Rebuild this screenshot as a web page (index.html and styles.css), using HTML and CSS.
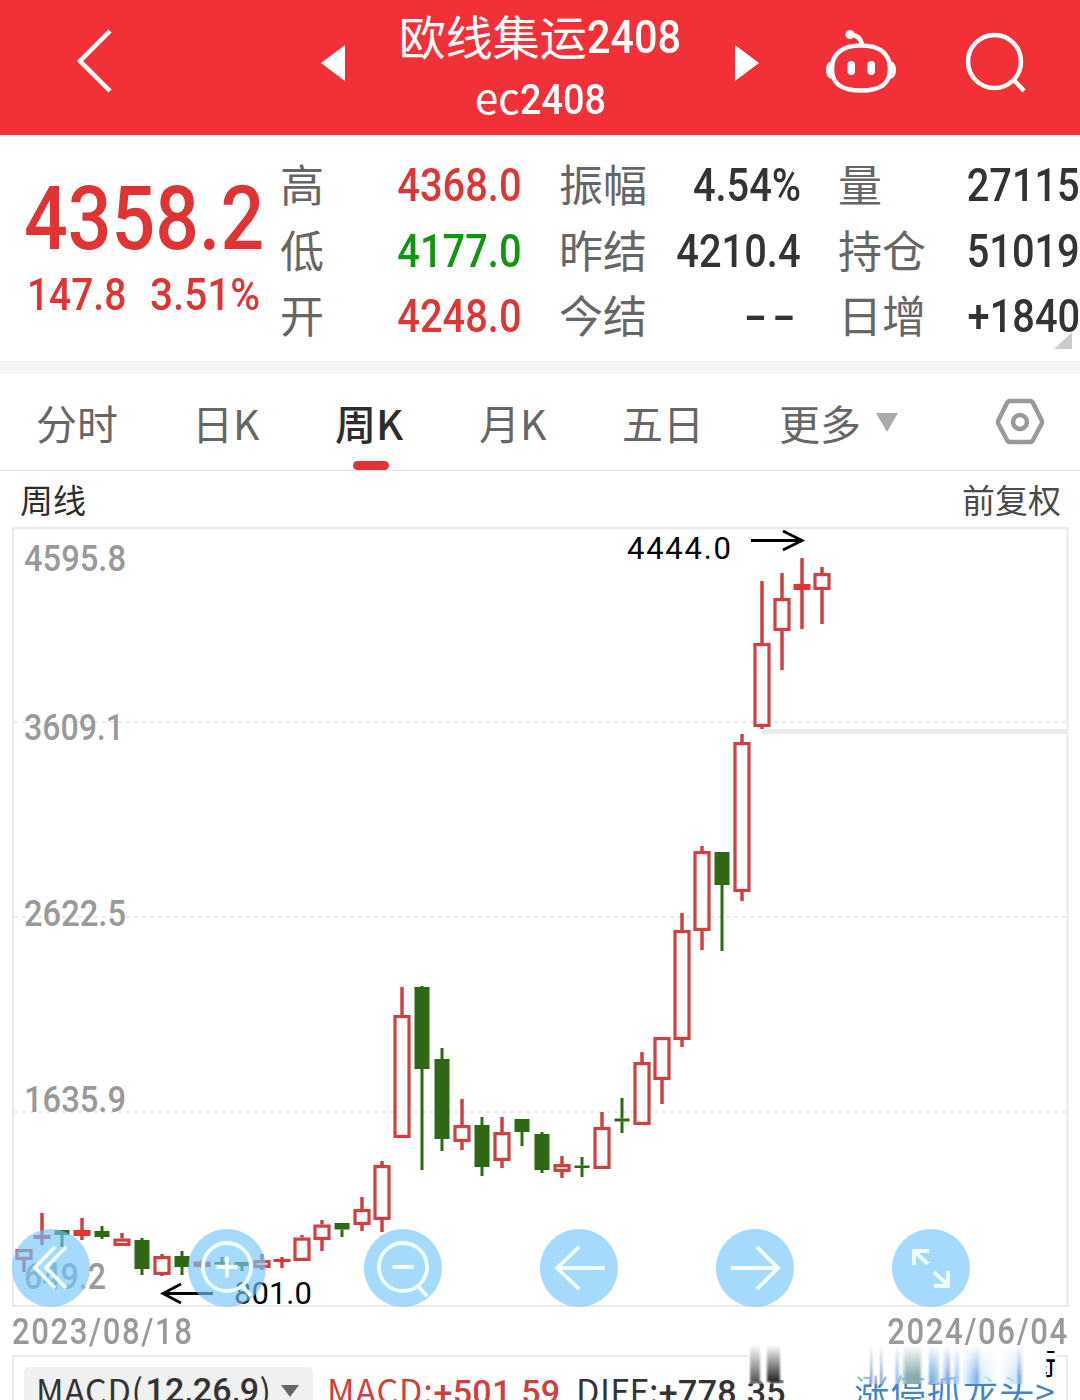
FILE: index.html
```html
<!DOCTYPE html>
<html lang="zh-CN">
<head>
    <meta charset="UTF-8">
    <meta name="viewport" content="width=device-width, initial-scale=1.0">
    <title>欧线集运2408</title>
    <link rel="stylesheet" href="styles.css">
</head>
<body>
    <header class="header">
        <svg class="back" width="44" height="70" viewBox="0 0 44 70"><path d="M37 5 L7 35 L37 65"/></svg>
        <svg class="prev" width="24" height="36" viewBox="0 0 24 36"><path d="M24 0 V36 L0 18 Z"/></svg>
        <div class="title">
            <div class="name">欧线集运<span class="num">2408</span></div>
            <div class="code">ec<span class="num">2408</span></div>
        </div>
        <svg class="next" width="24" height="36" viewBox="0 0 24 36"><path d="M0 0 V36 L24 18 Z"/></svg>
        <svg class="robot" width="70" height="64" viewBox="826 30 70 64">
            <path d="M861 45.500 C879 45.500 890 53 890 69 C890 84 881 90.500 861 90.500 C841 90.500 832 84 832 69 C832 53 843 45.500 861 45.500 Z"/>
            <path d="M862 45 C861 38 857 35 850 34.500"/>
            <path class="fill" d="M833 61 C828 61 826 65 826 70 C826 75 828 79 833 79 Z M889 61 C894 61 896 65 896 70 C896 75 894 79 889 79 Z"/>
            <circle class="fill" cx="850" cy="34.500" r="4.500"/>
            <rect class="fill" x="847.500" y="61" width="7.500" height="14" rx="3.700"/>
            <rect class="fill" x="867.500" y="61" width="7.500" height="14" rx="3.700"/>
        </svg>
        <svg class="search" width="64" height="64" viewBox="964 30 64 64">
            <circle cx="994.500" cy="61.500" r="26.500"/>
            <path d="M1013 79 L1024 91"/>
        </svg>
    </header>

    <section class="quote">
        <div class="price">
            <div class="last"><span class="num">4358.2</span></div>
            <div class="change"><span class="num">147.8</span><span class="num percent">3.51%</span></div>
        </div>
        <div class="stats">
            <div class="stat"><span>高</span><span class="num red">4368.0</span></div>
            <div class="stat"><span>振幅</span><span class="num">4.54%</span></div>
            <div class="stat"><span>量</span><span class="num">27115</span></div>
            <div class="stat"><span>低</span><span class="num green">4177.0</span></div>
            <div class="stat"><span>昨结</span><span class="num">4210.4</span></div>
            <div class="stat"><span>持仓</span><span class="num">51019</span></div>
            <div class="stat"><span>开</span><span class="num red">4248.0</span></div>
            <div class="stat"><span>今结</span><span class="num dashes">--</span></div>
            <div class="stat"><span>日增</span><span class="num">+1840</span></div>
        </div>
        <div class="corner"></div>
    </section>

    <nav class="tabs">
        <div><span class="tab">分时</span></div>
        <div><span class="tab">日K</span></div>
        <div><span class="tab active">周K</span></div>
        <div><span class="tab">月K</span></div>
        <div><span class="tab">五日</span></div>
        <div class="more"><span class="tab">更多</span><svg width="24" height="19" viewBox="0 0 24 19"><path d="M1 0 H23 L12 19 Z"/></svg></div>
        <svg class="gear" width="50" height="48" viewBox="995 398 50 48">
            <path d="M1010 401 H1030 Q1032 401 1033 403 L1041.500 420 Q1042.500 422 1041.500 424 L1033 440 Q1032 442 1030 442 H1010 Q1008 442 1007 440 L998.500 424 Q997.500 422 998.500 420 L1007 403 Q1008 401 1010 401 Z"/>
            <circle cx="1020" cy="422" r="7"/>
        </svg>
    </nav>

    <div class="chart-head">
        <span>周线</span>
        <span class="adjust">前复权</span>
    </div>

    <main class="chart">
        <svg class="kline" width="1080" height="780" viewBox="0 527 1080 780">
            <rect class="frame" x="13" y="528" width="1054.500" height="778"/>
            <path class="grid-line" d="M14 722 H1067 M14 917 H1067 M14 1112 H1067"/>
            <rect class="gap-line" x="762" y="729" width="306" height="5"/>
            <g id="candles"></g>
            <g class="axis">
                <text x="24" y="571" textLength="102" lengthAdjust="spacingAndGlyphs">4595.8</text>
                <text x="24" y="740" textLength="100" lengthAdjust="spacingAndGlyphs">3609.1</text>
                <text x="24" y="926" textLength="102" lengthAdjust="spacingAndGlyphs">2622.5</text>
                <text x="24" y="1112" textLength="102" lengthAdjust="spacingAndGlyphs">1635.9</text>
                <text x="24" y="1289" textLength="82" lengthAdjust="spacingAndGlyphs">649.2</text>
            </g>
            <g class="mark">
                <text x="627" y="559" textLength="104">4444.0</text>
                <path d="M751 540.500 H802 M783 531 L802 540.500 L783 550"/>
                <text x="234" y="1304" textLength="78">801.0</text>
                <path d="M213 1293.500 H163 M181 1284 L163 1293.500 L181 1303"/>
            </g>
        </svg>
        <div class="tools">
            <button class="tool"><svg width="78" height="78"><path d="M43 18 L23 38.500 L43 59 M54 18 L34 38.500 L54 59"/></svg></button>
            <button class="tool"><svg width="78" height="78"><circle cx="39" cy="38" r="24"/><path d="M54 57 L63 67 M28.500 38 H49.500 M39 27.500 V48.500"/></svg></button>
            <button class="tool"><svg width="78" height="78"><circle cx="39" cy="38" r="24"/><path d="M54 57 L63 67 M28.500 38 H49.500"/></svg></button>
            <button class="tool"><svg width="78" height="78"><path d="M65 39 H16 M39 18 L17 39 L39 60"/></svg></button>
            <button class="tool"><svg width="78" height="78"><path d="M15 39 H63 M41 18 L62 39 L41 60"/></svg></button>
            <button class="tool"><svg width="78" height="78"><path d="M22 36 V22 H37 M22 22 L36 35 M42 57 H56 V42 M56 56 L42 43"/></svg></button>
        </div>
    </main>

    <div class="dates">
        <span class="num">2023/08/18</span>
        <span class="num">2024/06/04</span>
    </div>

    <section class="indicator">
        <div class="picker">MACD(<b>12,26,9</b>)<svg width="18" height="12" viewBox="0 0 18 12"><path d="M0 0 H18 L9 12 Z"/></svg></div>
        <span class="macd">MACD:<b>+501.59</b></span>
        <span class="diff">DIFF:<b>+778.35</b></span>
        <a class="link">涨停抓龙头&gt;</a>
        <div class="haze">
            <i class="bar"></i>
            <i class="bar second"></i>
            <i class="streaks"></i>
            <span class="tail">街</span>
        </div>
    </section>

    <script>
        // x, high, body top, body bottom, low, type (r = hollow red, s = solid red, g = green)
        const candles = [
            [24, 1249, 1249, 1260, 1272, 'r'],
            [42, 1213, 1235, 1239, 1245, 's'],
            [62, 1230, 1230, 1235, 1247, 'g'],
            [82, 1218, 1230, 1236, 1240, 's'],
            [102, 1226, 1231, 1237, 1239, 'g'],
            [122, 1233, 1238.5, 1246, 1246, 'r'],
            [142, 1238, 1240, 1269, 1275, 'g'],
            [162, 1254, 1256, 1275, 1276, 'r'],
            [182, 1251, 1256, 1267, 1275, 'g'],
            [202, 1260, 1261.5, 1267, 1268, 's'],
            [222, 1257, 1262, 1264.5, 1268, 'g'],
            [242, 1262, 1262, 1266, 1271, 'g'],
            [262, 1254, 1260, 1268, 1270, 'r'],
            [282, 1257, 1259, 1262, 1268, 's'],
            [302, 1235, 1237.5, 1261, 1261, 'r'],
            [322, 1220, 1224.5, 1240, 1251, 'r'],
            [342, 1223, 1223, 1229.5, 1237, 'g'],
            [362, 1197, 1209, 1225, 1231, 'r'],
            [382, 1161, 1165, 1220, 1232, 'r'],
            [402, 987, 1015, 1138, 1138, 'r'],
            [422, 986, 987, 1069, 1170, 'g'],
            [442, 1048, 1059, 1139, 1151, 'g'],
            [462, 1099, 1125, 1142, 1150, 'r'],
            [482, 1117, 1125, 1167, 1176, 'g'],
            [502, 1117, 1132, 1161, 1168, 'r'],
            [522, 1119, 1119, 1132, 1146, 'g'],
            [542, 1132, 1134, 1170, 1173, 'g'],
            [562, 1156, 1164, 1172, 1178, 'r'],
            [582, 1157, 1165.5, 1168, 1177, 'g'],
            [602, 1112, 1127, 1169, 1169, 'r'],
            [622, 1098, 1118.5, 1121.5, 1133, 'g'],
            [642, 1052, 1062, 1125, 1125, 'r'],
            [662, 1037, 1037, 1080, 1104, 'r'],
            [682, 913, 930, 1040, 1047, 'r'],
            [702, 846, 851, 931, 950, 'r'],
            [722, 852, 852, 885, 951, 'g'],
            [742, 734, 742, 892, 901, 'r'],
            [762, 581, 643, 727, 729, 'r'],
            [782, 573, 598, 631, 670, 'r'],
            [802, 558, 584, 590, 629, 's'],
            [822, 567, 573, 590, 624, 'r']
        ];

        let html = '';
        candles.forEach(([x, high, top, bottom, low, type]) => {
            html += `<path class="wick-${type}" d="M${x} ${high} V${top} M${x} ${bottom} V${low}"/>`;
            if (type === 'r') {
                html += `<rect class="body-r" x="${x - 7}" y="${top + 1.6}" width="14" height="${bottom - top - 3.2}"/>`;
            } else {
                const half = type === 's' ? 8.5 : 7.5;
                html += `<rect class="body-${type}" x="${x - half}" y="${top}" width="${half * 2}" height="${bottom - top}"/>`;
            }
        });
        document.querySelector('#candles').innerHTML = html;
    </script>
</body>
</html>
```

FILE: styles.css
```css
* {
    box-sizing: border-box;
}
body {
    margin: 0;
    width: 1080px;
    height: 1400px;
    overflow: hidden;
    background-color: #fff;
    color: #333;
    font-family: "Noto Sans CJK SC", sans-serif;
}
svg {
    display: block;
    flex: none;
}
.num {
    display: inline-block;
    font-family: Roboto, sans-serif;
    font-weight: 500;
    transform: scaleX(0.865);
    transform-origin: right center;
}

/* header */
.header {
    display: flex;
    height: 135px;
    background-color: #f23037;
    color: #fff;
}
.header svg {
    fill: none;
    stroke: #fff;
    stroke-width: 4.5;
}
.header .fill,
.header .prev,
.header .next {
    fill: #fff;
    stroke: none;
}
.back {
    margin: 26px 0 0 73px;
}
.prev {
    margin: 45px 0 0 204px;
}
.title {
    width: 390px;
    text-align: center;
    white-space: nowrap;
}
.title .num {
    transform: scaleX(0.9);
    transform-origin: left center;
    margin-right: -10px;
}
.name {
    height: 69px;
    line-height: 69px;
    font-size: 47px;
}
.name .num {
    font-size: 46px;
    line-height: 60px;
    vertical-align: 2px;
}
.code {
    height: 56px;
    line-height: 54px;
    font-size: 42px;
}
.next {
    margin: 45px 0 0;
}
.robot {
    margin: 30px 0 0 67px;
}
.search {
    margin: 30px 0 0 68px;
}

/* quote */
.quote {
    position: relative;
    display: flex;
    height: 239px;
    padding-top: 17px;
    border-bottom: 13px solid #f5f5f5;
}
.price {
    width: 280px;
    color: #e03434;
}
.price .num {
    transform-origin: left center;
}
.last {
    height: 118px;
    padding: 5px 0 0 24px;
    line-height: 108px;
    font-size: 89px;
}
.change {
    display: flex;
    padding-left: 27px;
    line-height: 50px;
    font-size: 45px;
}
.change .percent {
    margin-left: 8px;
    transform: scaleX(0.9);
}
.stats {
    display: grid;
    grid-template-columns: 279px 279px 242px;
    grid-auto-rows: 65.5px;
    font-size: 44px;
    line-height: 63px;
    color: #666;
}
.stat {
    display: flex;
    justify-content: space-between;
    padding-right: 37px;
}
.stat:nth-child(3n) {
    padding-right: 0;
}
.stat .num {
    font-size: 46px;
    line-height: 66px;
    color: #333;
}
.stat .num.red {
    color: #dc3737;
}
.stat .num.green {
    color: #109610;
}
.stat .dashes {
    letter-spacing: 4px;
    transform: scaleX(1.45);
}
.corner {
    position: absolute;
    right: 8px;
    bottom: 12px;
    border-left: 18px solid transparent;
    border-bottom: 17px solid #ccc;
}

/* tabs */
.tabs {
    display: grid;
    grid-template-columns: 156px 143px 144px 143px 157px 216px 50px;
    height: 97px;
    padding-left: 36px;
    border-bottom: 1px solid #e2e2e2;
    font-size: 41px;
    line-height: 96px;
    color: #666;
}
.tab {
    display: inline-block;
}
.active {
    position: relative;
    font-weight: 500;
    color: #2d2d2d;
}
.active::after {
    content: "";
    position: absolute;
    left: 18px;
    top: 87px;
    width: 36px;
    height: 9px;
    border-radius: 5px;
    background-color: #e03434;
}
.more {
    display: flex;
}
.more svg {
    margin: 39px 0 0 14px;
    fill: #aaa;
}
.gear {
    margin-top: 24px;
    fill: none;
    stroke: #999;
    stroke-width: 4.5;
}

/* chart */
.chart-head {
    display: flex;
    justify-content: space-between;
    height: 56px;
    padding: 0 19px 0 20px;
    font-size: 33px;
    line-height: 56px;
    color: #2d2d2d;
}
.adjust {
    color: #4a4a4a;
}
.chart {
    position: relative;
    height: 780px;
}
.frame {
    fill: none;
    stroke: #e9e9e9;
    stroke-width: 2;
}
.grid-line {
    stroke: #e4e4e4;
    stroke-width: 1.5;
    stroke-dasharray: 4 4;
}
.gap-line {
    fill: #ebebeb;
}
.wick-r,
.wick-s {
    stroke: #d04040;
    stroke-width: 3.5;
}
.wick-g {
    stroke: #2f6815;
    stroke-width: 3;
}
.body-r {
    fill: #fff;
    stroke: #d04040;
    stroke-width: 3.2;
}
.body-s {
    fill: #df3535;
}
.body-g {
    fill: #2f6815;
}
.axis {
    fill: #999;
    font: 500 36px Roboto, sans-serif;
}
.mark {
    fill: #000;
    font: 31px Roboto, sans-serif;
}
.mark path {
    fill: none;
    stroke: #000;
    stroke-width: 2.8;
}
.tools {
    position: absolute;
    left: 12px;
    bottom: 0;
    display: flex;
    gap: 98px;
}
.tool {
    width: 78px;
    height: 78px;
    padding: 0;
    border: none;
    border-radius: 50%;
    background-color: rgba(117, 198, 252, 0.65);
    cursor: pointer;
}
.tool svg {
    fill: none;
    stroke: #f2ffff;
    stroke-width: 3.8;
}
.dates {
    display: flex;
    justify-content: space-between;
    height: 48px;
    padding: 0 11px 0 12px;
    font-size: 36px;
    line-height: 50px;
    letter-spacing: 1.8px;
    color: #999;
}
.dates .num:first-child {
    transform-origin: left center;
}

/* indicator */
.indicator {
    position: relative;
    display: flex;
    width: 1056px;
    height: 80px;
    margin-left: 12px;
    padding: 10px 0 0 10px;
    border: 2px solid #e9e9e9;
    font-size: 34px;
    line-height: 46px;
    white-space: nowrap;
}
.indicator b {
    font-family: Roboto, sans-serif;
    font-weight: 500;
    letter-spacing: 0.3px;
}
.picker {
    display: flex;
    width: 289px;
    height: 50px;
    padding-left: 12px;
    letter-spacing: 0.6px;
    border-radius: 5px;
    background-color: #f0f0f0;
}
.picker b {
    margin-left: 2px;
}
.picker svg {
    margin: 18px 0 0 9px;
    fill: #666;
}
.macd {
    width: 249px;
    margin-left: 14px;
    letter-spacing: 0.8px;
    color: #d04040;
}
.diff {
    letter-spacing: 0.5px;
}
.link {
    margin-left: auto;
    padding-right: 10px;
    font-size: 35px;
    letter-spacing: 1.2px;
    color: #4383cf;
}
.haze {
    position: absolute;
    right: 10px;
    top: -12px;
    width: 307px;
    height: 39px;
    overflow: hidden;
    background: linear-gradient(rgba(255, 255, 255, 0.9), #fff 40%, rgba(255, 255, 255, 0.3));
}
.bar {
    position: absolute;
    left: 1px;
    top: 0;
    width: 10px;
    height: 37px;
    background: linear-gradient(transparent, #555);
    filter: blur(1px);
}
.bar.second {
    left: 18px;
    width: 13px;
    background: linear-gradient(transparent, #222);
}
.streaks {
    position: absolute;
    left: 120px;
    top: 0;
    width: 165px;
    height: 39px;
    background: linear-gradient(90deg, transparent 0, #8fb0de 2px, transparent 5px, transparent 10px, #8aa9df 12px, transparent 15px, transparent 25px, #9ec0e5 28px, transparent 32px, #8bb0b0 37px, #86aaa6 50px, transparent 54px, transparent 58px, #7eafe0 62px, #a5c9e8 68px, transparent 72px, #86a8dc 79px, transparent 83px, #a6cbed 88px, transparent 92px, #d3ecfa 98px, #84b2e9 108px, #d9effb 112px, transparent 130px, #d0e7fa 147px, #7faae2 150px, transparent 155px);
    -webkit-mask-image: linear-gradient(transparent, #000 80%);
    mask-image: linear-gradient(transparent, #000 80%);
    filter: blur(0.6px);
}
.tail {
    position: absolute;
    right: 0;
    top: -8px;
    width: 10px;
    overflow: hidden;
    direction: rtl;
    font-size: 29px;
    line-height: 50px;
    color: #000;
}
```
